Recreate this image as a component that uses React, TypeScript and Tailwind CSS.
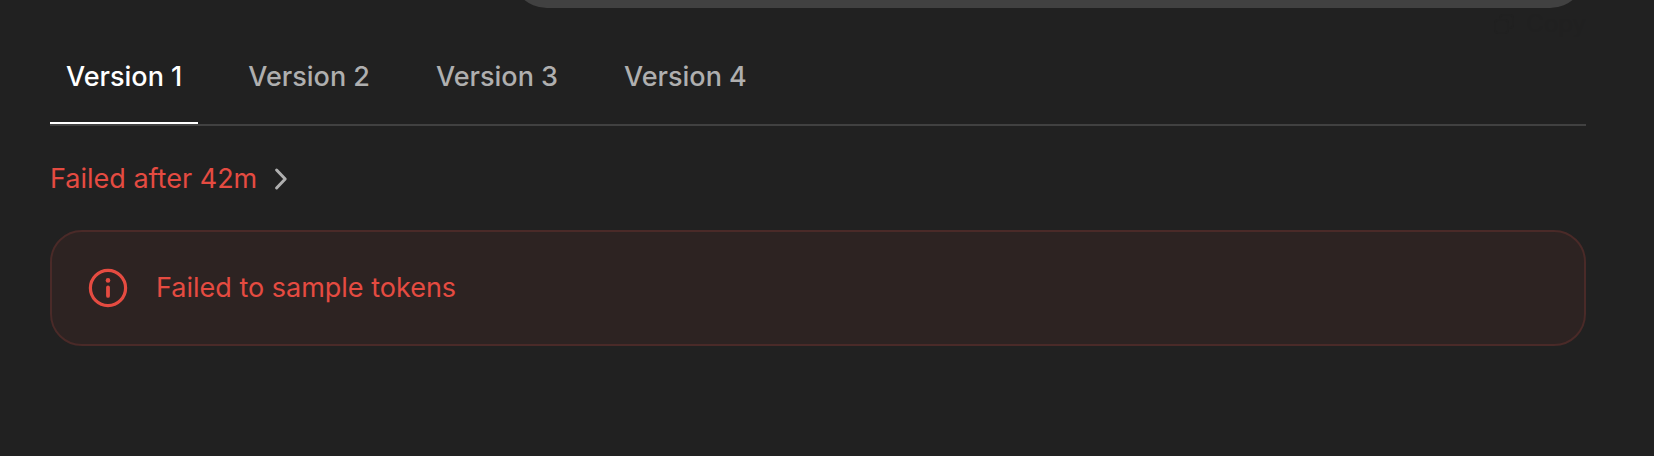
import { useState } from 'react'

const versions = ['Version 1', 'Version 2', 'Version 3', 'Version 4']

function CopyIcon() {
  return (
    <svg width="20" height="20" viewBox="0 0 20 20" fill="none" stroke="currentColor" strokeWidth="2">
      <rect x="1" y="6" width="13" height="13" rx="3" />
      <path d="M6 6V4a3 3 0 0 1 3-3h7a3 3 0 0 1 3 3v7a3 3 0 0 1-3 3h-2" />
    </svg>
  )
}

function ChevronIcon() {
  return (
    <svg width="16" height="24" viewBox="0 0 16 24" fill="none" className="shrink-0 text-[#afafaf]">
      <path
        d="M3.6 3l8.6 9-8.6 9"
        stroke="currentColor"
        strokeWidth="3"
        strokeLinecap="round"
        strokeLinejoin="round"
      />
    </svg>
  )
}

function InfoIcon() {
  return (
    <svg width="40" height="40" viewBox="0 0 40 40" fill="none" className="shrink-0">
      <circle cx="20" cy="20" r="17.6" stroke="currentColor" strokeWidth="3.2" />
      <circle cx="20" cy="12.4" r="2.3" fill="currentColor" />
      <path d="M20 19.5v8.4" stroke="currentColor" strokeWidth="3.8" strokeLinecap="round" />
    </svg>
  )
}

export default function App() {
  const [active, setActive] = useState(0)

  return (
    <main className="min-h-screen bg-[#212121] pr-[68px] pl-[50px] font-['Inter',sans-serif] text-[27px] leading-10">
      {/* End of the user's message bubble */}
      <div className="h-2 overflow-hidden">
        <div className="flex h-full items-end">
          <div className="ml-auto h-20 w-[70%] shrink-0 rounded-[36px] bg-[#414141]" />
        </div>
      </div>
      <div className="flex h-8 justify-end">
        <button type="button" className="flex items-center gap-3 text-2xl text-[#202020]">
          <CopyIcon />
          Copy
        </button>
      </div>

      {/* Version tabs */}
      <div role="tablist" className="flex gap-[34px] border-b-2 border-[#414141]">
        {versions.map((label, i) => (
          <button
            key={label}
            type="button"
            role="tab"
            aria-selected={active === i}
            onClick={() => setActive(i)}
            className={`border-b-2 px-4 pt-[17px] pb-[25px] font-medium ${
              active === i ? 'border-white text-white' : 'border-transparent text-[#afafaf]'
            }`}
          >
            {label}
          </button>
        ))}
      </div>

      <button type="button" className="mt-[33px] flex items-center gap-4 text-[#e54b41]">
        Failed after 42m
        <ChevronIcon />
      </button>

      <div
        role="alert"
        className="mt-[31px] flex items-center gap-7 rounded-[32px] border-2 border-[#4a2a28] bg-[#2d2322] px-9 py-9 text-[#e54b41]"
      >
        <InfoIcon />
        <p>Failed to sample tokens</p>
      </div>
    </main>
  )
}
